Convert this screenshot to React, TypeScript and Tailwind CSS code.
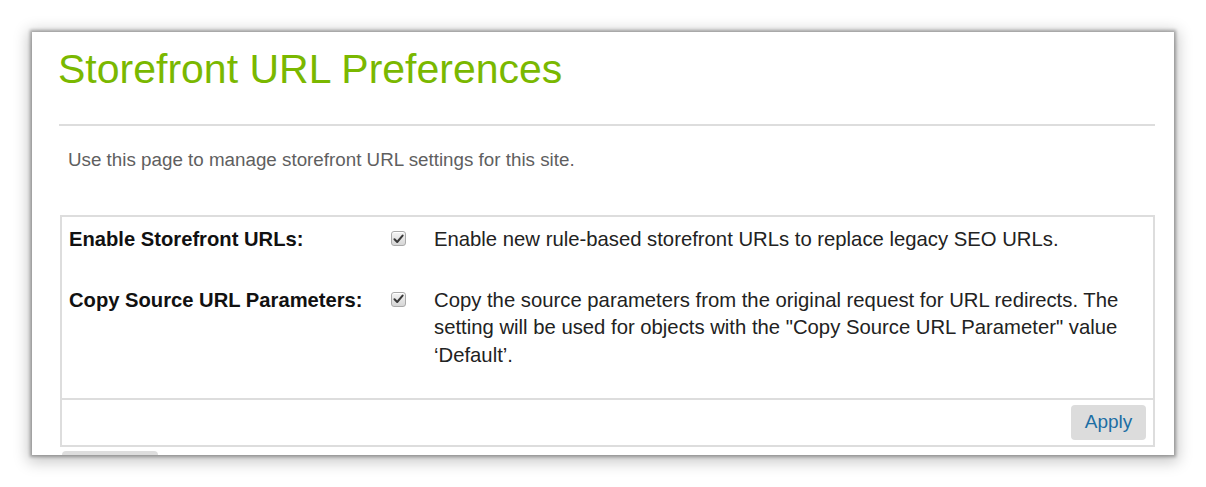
import React from 'react';

const Check = () => (
  <span className="flex h-[15px] w-[15px] shrink-0 items-center justify-center rounded-[3px] border border-[#a9a9a9] bg-gradient-to-b from-[#f4f4f4] to-[#d6d6d6] shadow-[inset_0_1px_0_#fff]">
    <svg width="11" height="10" viewBox="0 0 11 10">
      <path d="M1.5 5.2 L4.2 8 L9.6 1.6" fill="none" stroke="#3a3a3a" strokeWidth="2" strokeLinecap="round" strokeLinejoin="round" />
    </svg>
  </span>
);

const rows = [
  {
    label: 'Enable Storefront URLs:',
    text: 'Enable new rule-based storefront URLs to replace legacy SEO URLs.',
  },
  {
    label: 'Copy Source URL Parameters:',
    text: 'Copy the source parameters from the original request for URL redirects. The setting will be used for objects with the "Copy Source URL Parameter" value \u2018Default\u2019.',
  },
];

const App = () => {
  return (
    <div className="h-[487px] w-[1206px] overflow-hidden bg-white pl-[32px] pt-[32px] font-['Liberation_Sans',Arial,sans-serif]">
      <div className="relative h-[423px] w-[1142px] bg-white shadow-[0_0_3px_2px_rgba(0,0,0,0.3),0_3px_14px_4px_rgba(0,0,0,0.22)]">
        <div className="pl-[26px] pr-[19px] pt-[14px]">
          <h1 className="text-[41px] leading-[46px] text-[#7ab800]">Storefront URL Preferences</h1>
          <div className="ml-px mt-[32px] h-[2px] bg-[#dddddd]" />
          <p className="ml-[10px] mt-[24px] text-[18.8px] leading-[20px] text-[#5f5f5f]">
            Use this page to manage storefront URL settings for this site.
          </p>
          <div className="ml-[2px] mt-[45px] h-[232px] border-2 border-[#dddddd]">
            <div className="flex h-[181px] flex-col gap-[33px] pl-[7px] pt-[9px]">
              {rows.map((r) => (
                <div key={r.label} className="flex items-start">
                  <div className="w-[322px] text-[20.2px] font-bold leading-[27.5px] text-[#111]">{r.label}</div>
                  <div className="pt-[5px]">
                    <Check />
                  </div>
                  <div className="ml-[28px] w-[712px] text-[20.3px] leading-[27.5px] text-[#222]">{r.text}</div>
                </div>
              ))}
            </div>
            <div className="flex h-[47px] items-start justify-end border-t-2 border-[#dddddd] pr-[7px] pt-[5px]">
              <button className="h-[35px] w-[75px] rounded-[4px] bg-[#dcdcdc] text-[19px] text-[#1c6ea4]">Apply</button>
            </div>
          </div>
          <div className="ml-[4px] mt-[4px] h-[4px] w-[96px] rounded-t-[4px] bg-[#dddddd]" />
        </div>
      </div>
    </div>
  );
};

export default App;
